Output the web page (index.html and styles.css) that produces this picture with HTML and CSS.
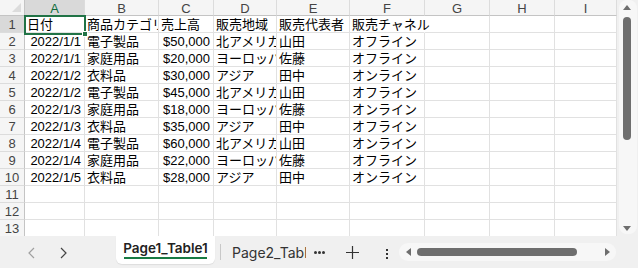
FILE: index.html
```html
<!DOCTYPE html>
<html lang="ja">
<head>
    <meta charset="UTF-8">
    <title>Sheet</title>
    <link rel="stylesheet" href="styles.css">
</head>
<body>

<div class="workbook">
    <div class="sheet">
        <div class="grid-wrap">
            <div class="grid" id="grid"></div>
            <div class="selection"><span class="handle"></span></div>
        </div>
        <div class="vscroll">
            <span class="arrow up"></span>
            <span class="vthumb"></span>
            <span class="arrow down"></span>
        </div>
    </div>

    <div class="tabbar">
        <div class="nav">
            <svg width="10" height="12" viewBox="0 0 10 12"><path d="M7 1 L2 6 L7 11" fill="none" stroke="#a0a0a0" stroke-width="1.2"/></svg>
            <svg width="10" height="12" viewBox="0 0 10 12"><path d="M3 1 L8 6 L3 11" fill="none" stroke="#444" stroke-width="1.2"/></svg>
        </div>
        <div class="tab active">Page1_Table1</div>
        <span class="tab-sep"></span>
        <div class="tab">Page2_Table</div>
        <span class="more"><i></i><i></i><i></i></span>
        <svg class="plus" width="13" height="13" viewBox="0 0 13 13"><path d="M6.5 0 V13 M0 6.5 H13" stroke="#333" stroke-width="1.2"/></svg>
        <span class="kebab"><i></i><i></i><i></i></span>
        <div class="hscroll">
            <span class="arrow left"></span>
            <span class="hthumb"></span>
            <span class="arrow right"></span>
        </div>
    </div>
</div>

<script>
    const cols = ['A', 'B', 'C', 'D', 'E', 'F', 'G', 'H', 'I'];
    const rows = [
        ['日付', '商品カテゴリ', '売上高', '販売地域', '販売代表者', '販売チャネル'],
        ['2022/1/1', '電子製品', '$50,000', '北アメリカ', '山田', 'オフライン'],
        ['2022/1/1', '家庭用品', '$20,000', 'ヨーロッパ', '佐藤', 'オフライン'],
        ['2022/1/2', '衣料品', '$30,000', 'アジア', '田中', 'オンライン'],
        ['2022/1/2', '電子製品', '$45,000', '北アメリカ', '山田', 'オフライン'],
        ['2022/1/3', '家庭用品', '$18,000', 'ヨーロッパ', '佐藤', 'オンライン'],
        ['2022/1/3', '衣料品', '$35,000', 'アジア', '田中', 'オフライン'],
        ['2022/1/4', '電子製品', '$60,000', '北アメリカ', '山田', 'オンライン'],
        ['2022/1/4', '家庭用品', '$22,000', 'ヨーロッパ', '佐藤', 'オフライン'],
        ['2022/1/5', '衣料品', '$28,000', 'アジア', '田中', 'オンライン'],
        [], [], []
    ];

    let html = '<div class="corner"><span class="tri"></span></div>';
    cols.forEach((c, i) => {
        html += `<div class="col-head${i === 0 ? ' picked' : ''}">${c}</div>`;
    });
    rows.forEach((r, ri) => {
        html += `<div class="row-head${ri === 0 ? ' picked' : ''}">${ri + 1}</div>`;
        cols.forEach((c, ci) => {
            let cls = 'cell';
            const v = r[ci] || '';
            if (ri > 0 && (ci === 0 || ci === 2)) cls += ' num';
            if (ri === 0 && ci === 5) cls += ' spill';
            html += `<div class="${cls}">${v}</div>`;
        });
    });
    document.getElementById('grid').innerHTML = html;
</script>

</body>
</html>
```

FILE: styles.css
```css
* {
    box-sizing: border-box;
    margin: 0;
    padding: 0;
}

body {
    width: 638px;
    height: 268px;
    overflow: hidden;
    background: #f0f0f0;
    font-family: 'Liberation Sans', 'Noto Sans CJK JP', sans-serif;
    color: #000;
}

.workbook {
    display: flex;
    flex-direction: column;
    height: 268px;
}

.sheet {
    display: flex;
    height: 236px;
}

.grid-wrap {
    position: relative;
    width: 617px;
    height: 236px;
    overflow: hidden;
    background: #fff;
}

.grid {
    display: grid;
    grid-template-columns: 25px 60px 74px 55px 63px 73px 75px 65px 65px 62px;
    grid-template-rows: 16px;
    grid-auto-rows: 17px;
    font-size: 13px;
}

.corner,
.col-head,
.row-head {
    background: #f5f5f5;
    color: #444;
    display: flex;
    align-items: center;
    justify-content: center;
    font-size: 13px;
}

.corner {
    position: relative;
    border-right: 1px solid #c4c4c4;
    border-bottom: 1px solid #c4c4c4;
}

.corner .tri {
    position: absolute;
    right: 3px;
    bottom: 3px;
    width: 0;
    height: 0;
    border-left: 9px solid transparent;
    border-bottom: 9px solid #dcdcdc;
}

.col-head {
    border-right: 1px solid #dcdcdc;
    border-bottom: 1px solid #c4c4c4;
    padding-top: 1px;
}

.row-head {
    border-right: 1px solid #c4c4c4;
    border-bottom: 1px solid #dcdcdc;
}

.col-head.picked,
.row-head.picked {
    background: #d9d9d9;
}

.col-head.picked {
    color: #0f6b3a;
}

.cell {
    border-right: 1px solid #e1e1e1;
    border-bottom: 1px solid #e1e1e1;
    line-height: 17px;
    padding: 0 2px;
    white-space: nowrap;
    overflow: hidden;
}

.cell.num {
    text-align: right;
    padding-right: 3px;
}

.cell.spill {
    overflow: visible;
    border-right-color: transparent;
}

.selection {
    position: absolute;
    left: 24px;
    top: 15px;
    width: 62px;
    height: 20px;
    border: 2px solid #217346;
}

.selection .handle {
    position: absolute;
    right: -4px;
    bottom: -4px;
    width: 6px;
    height: 6px;
    background: #217346;
    border: 1px solid #fff;
}

.vscroll {
    position: relative;
    width: 21px;
    height: 236px;
    background: #f0f0f0;
}

.vscroll::before {
    content: '';
    position: absolute;
    left: 2px;
    right: 1px;
    top: 0;
    bottom: 2px;
    background: #f7f7f7;
    border-radius: 8px;
}

.arrow {
    position: absolute;
    width: 0;
    height: 0;
}

.arrow.up {
    left: 6px;
    top: 5px;
    border-left: 4px solid transparent;
    border-right: 4px solid transparent;
    border-bottom: 5px solid #6e6e6e;
}

.arrow.down {
    left: 6px;
    top: 226px;
    border-left: 4px solid transparent;
    border-right: 4px solid transparent;
    border-top: 5px solid #6e6e6e;
}

.vthumb {
    position: absolute;
    left: 6px;
    top: 17px;
    width: 8px;
    height: 123px;
    background: #6e6e6e;
    border-radius: 4px;
}

.tabbar {
    display: flex;
    align-items: center;
    height: 32px;
    background: #f0f0f0;
    font-family: Inter, 'Liberation Sans', sans-serif;
    font-size: 13.5px;
    color: #333;
}

.nav {
    display: flex;
    align-items: center;
    gap: 21px;
    width: 116px;
    padding-left: 27px;
    padding-top: 1px;
}

.tab {
    white-space: nowrap;
}

.tab.active {
    width: 99px;
    align-self: flex-start;
    height: 28px;
    background: #fff;
    border-radius: 0 0 6px 6px;
    font-weight: 600;
    color: #222;
    text-align: center;
    position: relative;
    line-height: 20px;
    padding-top: 2px;
    box-shadow: 0 1px 1px rgba(0, 0, 0, 0.08);
}

.tab.active::after {
    content: '';
    position: absolute;
    left: 8px;
    right: 8px;
    bottom: 5px;
    height: 2px;
    background: #177a43;
}

.tab-sep {
    width: 1px;
    height: 16px;
    background: #c8c8c8;
    margin: 0 11px 0 5px;
}

.tab:not(.active) {
    width: 74px;
    overflow: hidden;
    font-size: 14px;
    padding-top: 1px;
}

.more {
    display: flex;
    gap: 1px;
    margin-left: 8px;
    padding-top: 1px;
}

.more i {
    width: 3px;
    height: 3px;
    border-radius: 50%;
    background: #333;
}

.plus {
    margin-left: 21px;
    margin-top: 1px;
}

.kebab {
    display: flex;
    flex-direction: column;
    gap: 2px;
    margin-left: 27px;
    margin-top: 3px;
}

.kebab i {
    width: 2px;
    height: 2px;
    background: #333;
}

.hscroll {
    position: relative;
    width: 217px;
    height: 18px;
    margin-left: 11px;
    background: #f7f7f7;
    border-radius: 9px;
}

.arrow.left {
    left: 7px;
    top: 5px;
    border-top: 4px solid transparent;
    border-bottom: 4px solid transparent;
    border-right: 5px solid #6e6e6e;
}

.arrow.right {
    left: 206px;
    top: 5px;
    border-top: 4px solid transparent;
    border-bottom: 4px solid transparent;
    border-left: 5px solid #6e6e6e;
}

.hthumb {
    position: absolute;
    left: 18px;
    top: 5px;
    width: 160px;
    height: 8px;
    background: #6e6e6e;
    border-radius: 4px;
}
```
